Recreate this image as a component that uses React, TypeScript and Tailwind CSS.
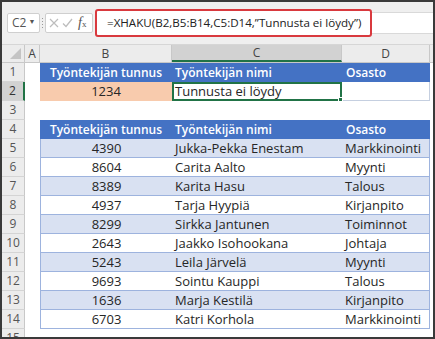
import React from "react";

const data = [
  ["4390", "Jukka-Pekka Enestam", "Markkinointi"],
  ["8604", "Carita Aalto", "Myynti"],
  ["8389", "Karita Hasu", "Talous"],
  ["4937", "Tarja Hyypiä", "Kirjanpito"],
  ["8299", "Sirkka Jantunen", "Toiminnot"],
  ["2643", "Jaakko Isohookana", "Johtaja"],
  ["5243", "Leila Järvelä", "Myynti"],
  ["9693", "Sointu Kauppi", "Talous"],
  ["1636", "Marja Kestilä", "Kirjanpito"],
  ["6703", "Katri Korhola", "Markkinointi"],
];

function RowHead({ n, active }: { n: number; active?: boolean }) {
  return (
    <div
      className={
        "w-[23px] shrink-0 h-full flex items-center justify-center text-[12px] border-b border-[#d4d4d4] " +
        (active
          ? "bg-[#d2d2d2] text-[#333] border-r-2 border-r-[#217346]"
          : "bg-[#ececec] text-[#555] border-r border-r-[#c8c8c8]")
      }
    >
      {n}
    </div>
  );
}

function FormulaBar() {
  return (
    <div className="h-[43px] shrink-0 bg-[#efefef] flex items-center pl-[5px] border-b border-[#d6d6d6]">
      <div className="w-[33px] shrink-0 h-[20px] bg-white border border-[#cfcfcf] rounded-[2px] flex items-center pl-[4px] text-[12px] text-[#555]">
        C2<span className="text-[7px] ml-[2px] -mt-[4px]">▼</span>
      </div>
      <div className="w-[5px] shrink-0 flex flex-col items-center gap-[2px]">
        <span className="w-[1px] h-[1px] bg-[#999]" />
        <span className="w-[1px] h-[1px] bg-[#999]" />
        <span className="w-[1px] h-[1px] bg-[#999]" />
        <span className="w-[1px] h-[1px] bg-[#999]" />
      </div>
      <div className="w-[48px] shrink-0 h-[20px] bg-white border border-[#cfcfcf] rounded-[2px] flex items-center pl-[3px] gap-[3px]">
        <svg width="10" height="10" viewBox="0 0 10 10">
          <path d="M1 1 L9 9 M9 1 L1 9" stroke="#bdbdbd" strokeWidth="1.2" fill="none" />
        </svg>
        <svg width="11" height="10" viewBox="0 0 11 10">
          <path d="M1 5.5 L4 8.5 L10 1" stroke="#bdbdbd" strokeWidth="1.3" fill="none" />
        </svg>
        <span className="ml-[2px] text-[#555] font-['Liberation_Serif',serif] italic text-[14px] leading-none">
          f<span className="text-[9px] not-italic">x</span>
        </span>
      </div>
      <div className="flex-1 ml-[2px] h-[22px] bg-white border-y border-[#d9d9d9] flex items-center">
        <div className="w-[277px] h-[28px] shrink-0 border-2 border-[#d9393e] rounded-[3px] bg-white flex items-center pl-[10px] text-[11.6px] text-[#222] whitespace-nowrap">
          =XHAKU(B2,B5:B14,C5:D14,”Tunnusta ei löydy”)
        </div>
      </div>
    </div>
  );
}

function ColHeaders() {
  return (
    <div className="flex h-[18px] shrink-0 bg-[#ececec] text-[12px] text-[#444] border-b border-[#c8c8c8]">
      <div className="w-[23px] shrink-0 h-full border-r border-[#c8c8c8] flex items-end justify-end pr-[3px] pb-[3px]">
        <svg width="11" height="11" viewBox="0 0 11 11">
          <path d="M11 0 L11 11 L0 11 Z" fill="#c4c4c4" />
        </svg>
      </div>
      <div className="w-[15px] shrink-0 border-r border-[#c8c8c8] flex items-center justify-center">A</div>
      <div className="w-[132px] shrink-0 border-r border-[#c8c8c8] flex items-center justify-center">B</div>
      <div className="w-[170px] shrink-0 bg-[#d2d2d2] border-r border-[#c8c8c8] border-b-2 border-b-[#217346] flex items-center justify-center">
        C
      </div>
      <div className="w-[88px] shrink-0 border-r border-[#c8c8c8] flex items-center justify-center">D</div>
      <div className="flex-1" />
    </div>
  );
}

function BlueHead({ n }: { n: number }) {
  return (
    <div className="flex h-[19px] shrink-0 text-[12px] whitespace-nowrap">
      <RowHead n={n} />
      <div className="w-[15px] shrink-0" />
      <div className="w-[390px] shrink-0 flex bg-[#4472c4] text-white font-semibold">
        <div className="w-[132px] shrink-0 flex items-center justify-center">Työntekijän tunnus</div>
        <div className="w-[170px] shrink-0 flex items-center pl-[3px]">Työntekijän nimi</div>
        <div className="flex-1 flex items-center pl-[4px]">Osasto</div>
      </div>
      <div className="flex-1" />
    </div>
  );
}

export default function App() {
  return (
    <div className="w-[435px] h-[339px] overflow-hidden border-2 border-[#3a3a3a] bg-white flex flex-col font-['Open_Sans',sans-serif] text-[13px] leading-none">
      <FormulaBar />
      <ColHeaders />
      <BlueHead n={1} />
      <div className="flex h-[19px] shrink-0 text-[#262626] whitespace-nowrap">
        <RowHead n={2} active />
        <div className="w-[15px] shrink-0" />
        <div className="w-[132px] shrink-0 bg-[#f8cbad] flex items-center justify-center">1234</div>
        <div className="relative w-[170px] shrink-0 border-2 border-[#217346] flex items-center pl-[1px]">
          Tunnusta ei löydy
          <span className="absolute -right-[3px] -bottom-[3px] w-[5px] h-[5px] bg-[#217346] border border-white" />
        </div>
        <div className="w-[88px] shrink-0 border-r border-b border-[#c5cfe0]" />
        <div className="flex-1" />
      </div>
      <div className="flex h-[19px] shrink-0">
        <RowHead n={3} />
      </div>
      <BlueHead n={4} />
      {data.map((r, i) => (
        <div key={r[0]} className="flex h-[19px] shrink-0 text-[#262626] whitespace-nowrap">
          <RowHead n={i + 5} />
          <div className="w-[15px] shrink-0" />
          <div
            className={
              "w-[390px] shrink-0 flex border-x border-b border-[#9db3de] " +
              (i % 2 === 0 ? "bg-[#d9e1f2]" : "bg-white")
            }
          >
            <div className="w-[131px] shrink-0 flex items-center justify-center">{r[0]}</div>
            <div className="w-[170px] shrink-0 flex items-center pl-[3px]">{r[1]}</div>
            <div className="flex-1 flex items-center pl-[3px]">{r[2]}</div>
          </div>
          <div className="flex-1" />
        </div>
      ))}
      <div className="flex h-[19px] shrink-0">
        <RowHead n={15} />
      </div>
    </div>
  );
}
